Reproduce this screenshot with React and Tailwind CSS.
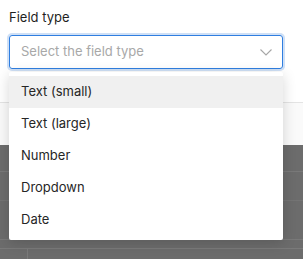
const options = ["Text (small)", "Text (large)", "Number", "Dropdown", "Date"];

export default function App() {
  return (
    <div
      className="relative w-[303px] h-[259px] overflow-hidden bg-white"
      style={{ fontFamily: "Inter, 'Liberation Sans', sans-serif" }}
    >
      {/* Modal panel */}
      <div className="h-[145px] bg-white flex flex-col">
        <div className="pl-[9px] pr-[20px] pt-[8px]">
          <label className="block text-[13px] leading-[18px] text-[#1f1f1f]">Field type</label>
          <div className="mt-[9px] h-[34px] flex items-center justify-between rounded-[3px] border border-[#2f7ee0] ring-2 ring-[#cfe0f6] pl-[11px] pr-[10px]">
            <span className="text-[13px] text-[#a8a8a8]">Select the field type</span>
            <svg width="12" height="7" viewBox="0 0 12 7" fill="none">
              <path d="M0.5 0.5 L6 6 L11.5 0.5" stroke="#a6a6a6" strokeWidth="1.1" />
            </svg>
          </div>
        </div>
        <div className="mt-auto h-[43px] border-t border-[#e4e4e4] bg-[#fafafa]" />
      </div>

      {/* Dimmed table behind */}
      <div className="h-[114px] bg-[#6c6c6c] flex flex-col">
        <div className="h-[27px] border-b border-[#797979]" />
        <div className="h-[29px] border-b border-[#747474]" />
        <div className="h-[39px] border-b border-[#797979]" />
        <div className="h-[9px] border-b border-[#7a7a7a]" />
        <div className="flex-1 flex">
          <div className="w-[28px] border-r border-[#7a7a7a]" />
        </div>
      </div>

      {/* Dropdown menu */}
      <ul className="absolute left-[9px] top-[72px] w-[274px] bg-white rounded-[2px] py-[4px] shadow-[0_3px_14px_rgba(0,0,0,0.16)]">
        {options.map((o, i) => (
          <li
            key={o}
            className={
              "h-[32px] flex items-center px-[12px] text-[13px] text-[#262626] " +
              (i === 0 ? "bg-[#f0f0f0]" : "")
            }
          >
            {o}
          </li>
        ))}
      </ul>
    </div>
  );
}
